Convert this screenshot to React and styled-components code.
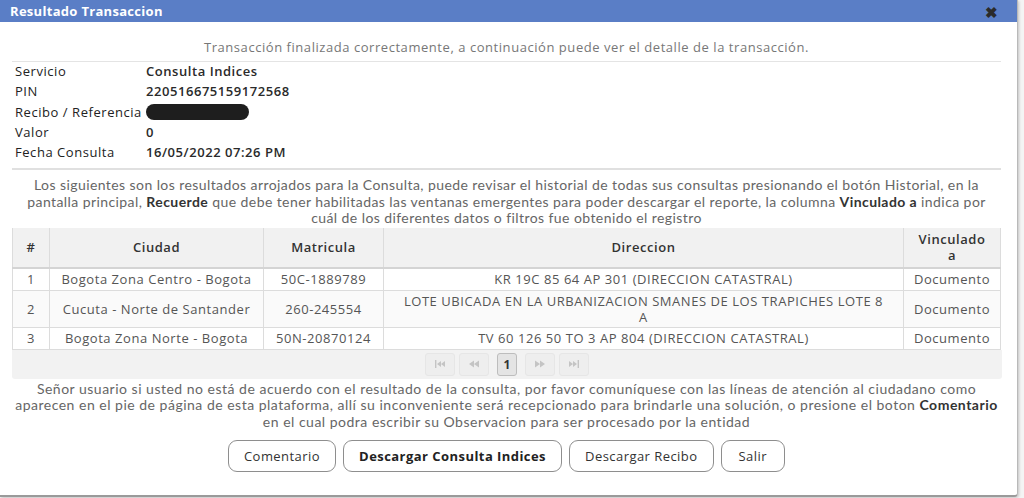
import styled, { createGlobalStyle } from "styled-components";

const Global = createGlobalStyle`
  html, body { margin: 0; padding: 0; background: #f3f3f3; }
  body {
    font-family: "Open Sans", "Noto Sans", sans-serif;
    color: #555;
    letter-spacing: 0.55px;
  }
`;

const Page = styled.div`
  width: 1024px;
  height: 498px;
  overflow: hidden;
  background: #f4f4f4;
`;

const Dialog = styled.div`
  width: 1017px;
  height: 495px;
  background: #fff;
  border-right: 1px solid #b9b9b9;
  border-bottom: 2px solid #9a9a9a;
  border-bottom-right-radius: 4px;
  box-shadow: 1px 1px 3px rgba(0, 0, 0, 0.2);
  display: flex;
  flex-direction: column;
`;

const TitleBar = styled.div`
  height: 22px;
  background: #5a7ec6;
  display: flex;
  align-items: center;
  justify-content: space-between;
  padding: 0 18px 0 10px;
`;

const Title = styled.span`
  color: #fff;
  font-weight: 700;
  font-size: 13px;
  letter-spacing: 0.3px;
`;

const Close = styled.span`
  color: #2b2b2b;
  font-size: 15px;
  font-weight: 700;
  line-height: 1;
  margin-top: 2px;
`;

const Body = styled.div`
  padding: 0 16px 0 12px;
  display: flex;
  flex-direction: column;
`;

const Subtitle = styled.div`
  text-align: center;
  font-size: 13px;
  color: #777;
  padding: 16px 0 5px;
  border-bottom: 1px solid #e4e4e4;
`;

const Info = styled.div`
  display: grid;
  grid-template-columns: 131px 1fr;
  padding: 0 0 6px 3px;
  margin-top: -1px;
  border-bottom: 2px solid #e0e0e0;
  font-size: 13px;
  line-height: 20.3px;
  color: #222;
`;

const Value = styled.span`
  font-weight: 600;
  color: #2a2a2a;
`;

const Redacted = styled.span`
  display: inline-block;
  width: 103px;
  height: 16px;
  border-radius: 8px;
  background: #1e1e1e;
  vertical-align: middle;
  margin-top: -3px;
`;

const Note = styled.p`
  margin: 0;
  padding: ${(p) => p.pad};
  text-align: center;
  font-family: "Lato", "Open Sans", sans-serif;
  font-size: 14px;
  letter-spacing: ${(p) => p.ls || 0.45}px;
  line-height: 16.4px;
  color: #666;
  white-space: nowrap;

  b {
    color: #333;
    font-weight: 700;
  }
`;

const Table = styled.table`
  width: 988px;
  table-layout: fixed;
  border-collapse: collapse;
  font-size: 13px;
  color: #555;
`;

const Th = styled.th`
  box-sizing: border-box;
  background: #f1f1f1;
  color: #333;
  font-weight: 600;
  height: 40px;
  padding: 0 10px;
  line-height: 16px;
  border: 1px solid #dcdcdc;
  border-top: none;
  width: ${(p) => p.w}px;
`;

const Td = styled.td`
  text-align: center;
  padding: 0 ${(p) => (p.wrap ? 16 : 9)}px;
  height: ${(p) => p.h || 21}px;
  line-height: 16px;
  border: 1px solid #dcdcdc;
  border-top: ${(p) => (p.first ? "2px solid #d4d4d4" : "1px solid #e0e0e0")};
  background: ${(p) => (p.alt ? "#fafafa" : "#fff")};
  white-space: ${(p) => (p.wrap ? "normal" : "nowrap")};
`;

const Pager = styled.div`
  width: 990px;
  height: 29px;
  background: #f2f2f2;
  border-radius: 0 0 3px 3px;
  display: flex;
  align-items: center;
  justify-content: center;
  gap: 4px;
`;

const PageBtn = styled.span`
  width: ${(p) => (p.active ? 18 : 28)}px;
  height: 21px;
  border-radius: 3px;
  display: flex;
  align-items: center;
  justify-content: center;
  font-size: 12px;
  font-weight: 700;
  color: ${(p) => (p.active ? "#333" : "#c9c9c9")};
  background: ${(p) => (p.active ? "#e4e4e4" : "#eeeeee")};
  border: 1px solid ${(p) => (p.active ? "#bdbdbd" : "#e6e6e6")};
  margin: 0 ${(p) => (p.active ? 4 : 0)}px;
  letter-spacing: 0;
`;

const Actions = styled.div`
  display: flex;
  justify-content: center;
  gap: 7px;
  padding: 10px 0 0 0;
`;

const Button = styled.button`
  height: 32px;
  padding: 0 ${(p) => p.px || 15}px;
  border: 1px solid #8e8e8e;
  border-radius: 9px;
  background: #fff;
  font-family: "Open Sans", "Noto Sans", sans-serif;
  letter-spacing: 0.45px;
  font-size: 13px;
  font-weight: ${(p) => (p.bold ? 700 : 400)};
  color: ${(p) => (p.bold ? "#222" : "#333")};
  cursor: pointer;
`;

const rows = [
  ["1", "Bogota Zona Centro - Bogota", "50C-1889789", "KR 19C 85 64 AP 301 (DIRECCION CATASTRAL)", "Documento", 21],
  ["2", "Cucuta - Norte de Santander", "260-245554", "LOTE UBICADA EN LA URBANIZACION SMANES DE LOS TRAPICHES LOTE 8 A", "Documento", 36],
  ["3", "Bogota Zona Norte - Bogota", "50N-20870124", "TV 60 126 50 TO 3 AP 804 (DIRECCION CATASTRAL)", "Documento", 21],
];

const Arrow = ({ d }) => (
  <svg width="12" height="8" viewBox="0 0 12 8" fill="#c4c4c4">
    <path d={d} />
  </svg>
);

export default function App() {
  return (
    <Page>
      <Global />
      <Dialog>
        <TitleBar>
          <Title>Resultado Transaccion</Title>
          <Close>✖</Close>
        </TitleBar>
        <Body>
          <Subtitle>
            Transacción finalizada correctamente, a continuación puede ver el detalle de la transacción.
          </Subtitle>
          <Info>
            <span>Servicio</span>
            <Value>Consulta Indices</Value>
            <span>PIN</span>
            <Value>220516675159172568</Value>
            <span>Recibo / Referencia</span>
            <span><Redacted /></span>
            <span>Valor</span>
            <Value>0</Value>
            <span>Fecha Consulta</span>
            <Value>16/05/2022 07:26 PM</Value>
          </Info>
          <Note pad="7px 0 1px" ls={0.42}>
            Los siguientes son los resultados arrojados para la Consulta, puede revisar el historial de todas sus
            consultas presionando el botón Historial, en la
            <br />
            pantalla principal, <b>Recuerde</b> que debe tener habilitadas las ventanas emergentes para poder
            descargar el reporte, la columna <b>Vinculado a</b> indica por
            <br />
            cuál de los diferentes datos o filtros fue obtenido el registro
          </Note>
          <Table>
            <thead>
              <tr>
                <Th w={37}>#</Th>
                <Th w={214}>Ciudad</Th>
                <Th w={120}>Matricula</Th>
                <Th w={520}>Direccion</Th>
                <Th w={97}>Vinculado a</Th>
              </tr>
            </thead>
            <tbody>
              {rows.map((r, i) => (
                <tr key={r[0]}>
                  {r.slice(0, 5).map((c, j) => (
                    <Td key={j} h={r[5]} first={i === 0} alt={i === 1} wrap={j === 3}>
                      {c}
                    </Td>
                  ))}
                </tr>
              ))}
            </tbody>
          </Table>
          <Pager>
            <PageBtn><Arrow d="M1 0h1.4v8H1zM3 4l4-3v6zM7 4l4-3v6z" /></PageBtn>
            <PageBtn><Arrow d="M1 4l5-3.5v7zM6 4l5-3.5v7z" /></PageBtn>
            <PageBtn active>1</PageBtn>
            <PageBtn><Arrow d="M11 4l-5-3.5v7zM6 4l-5-3.5v7z" /></PageBtn>
            <PageBtn><Arrow d="M11 0H9.6v8H11zM9 4L5 1v6zM5 4L1 1v6z" /></PageBtn>
          </Pager>
          <Note pad="2px 0 0" ls={0.5}>
            Señor usuario si usted no está de acuerdo con el resultado de la consulta, por favor comuníquese con las
            líneas de atención al ciudadano como
            <br />
            aparecen en el pie de página de esta plataforma, allí su inconveniente será recepcionado para brindarle
            una solución, o presione el boton <b>Comentario</b>
            <br />
            en el cual podra escribir su Observacion para ser procesado por la entidad
          </Note>
          <Actions>
            <Button>Comentario</Button>
            <Button bold>Descargar Consulta Indices</Button>
            <Button>Descargar Recibo</Button>
            <Button px={17}>Salir</Button>
          </Actions>
        </Body>
      </Dialog>
    </Page>
  );
}
